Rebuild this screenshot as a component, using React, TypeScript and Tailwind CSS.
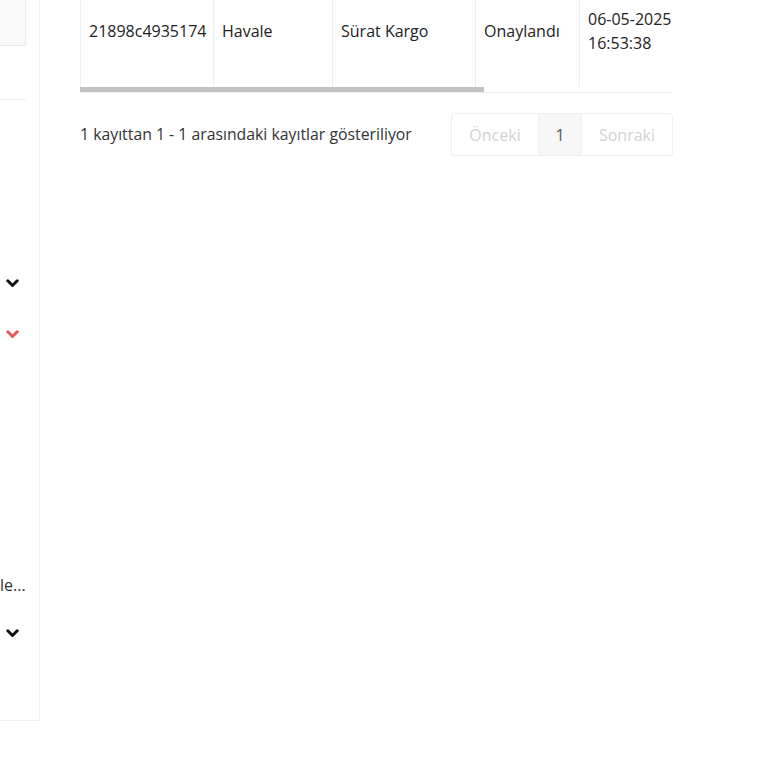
import React from "react";

function Chevron({ color }: { color: string }) {
  return (
    <svg width="13" height="9" viewBox="0 0 13 9">
      <polyline
        points="1.8,1.8 6.5,6.5 11.2,1.8"
        fill="none"
        stroke={color}
        strokeWidth="3"
        strokeLinecap="round"
        strokeLinejoin="round"
      />
    </svg>
  );
}

export default function App() {
  const font = { fontFamily: '"Open Sans", "Noto Sans", sans-serif' };
  return (
    <div className="w-[768px] h-[768px] bg-white flex text-[#333]" style={font}>
      {/* Sidebar */}
      <div className="w-[40px] h-[721px] border-r border-b border-[#f1f1f1] shrink-0 flex flex-col overflow-hidden">
        <div className="w-[26px] h-[46px] bg-[#f9f9f9] border-r border-b border-[#ececec]" />
        <div className="mt-[53px] w-[26px] h-px bg-[#efefef]" />
        <div className="mt-[179px] pl-[6px] h-[9px] flex items-center">
          <Chevron color="#111" />
        </div>
        <div className="mt-[42px] pl-[6px] h-[9px] flex items-center">
          <Chevron color="#e05a5a" />
        </div>
        <div className="mt-[235px] h-[22px] text-[16px] leading-[22px] text-[#333] whitespace-nowrap">
          le...
        </div>
        <div className="mt-[33px] pl-[6px] h-[9px] flex items-center">
          <Chevron color="#111" />
        </div>
      </div>

      {/* Main */}
      <div className="ml-[40px] w-[593px] flex flex-col">
        <div className="w-[593px] overflow-hidden relative">
          <table className="table-fixed w-[700px] border-collapse text-[16px] leading-[24px] text-[#222]">
            <colgroup>
              <col className="w-[133px]" />
              <col className="w-[119px]" />
              <col className="w-[143px]" />
              <col className="w-[104px]" />
              <col className="w-[201px]" />
            </colgroup>
            <tbody>
              <tr className="h-[87px]">
                <td className="border-l border-r border-[#eeeeee] px-[8px] align-top">
                  <div className="h-[62px] flex items-center whitespace-nowrap">21898c4935174</div>
                </td>
                <td className="border-r border-[#eeeeee] px-[8px] align-top">
                  <div className="h-[62px] flex items-center">Havale</div>
                </td>
                <td className="border-r border-[#eeeeee] px-[8px] align-top">
                  <div className="h-[62px] flex items-center">Sürat Kargo</div>
                </td>
                <td className="border-r border-[#eeeeee] px-[8px] align-top">
                  <div className="h-[62px] flex items-center">Onaylandı</div>
                </td>
                <td className="px-[8px] align-top">
                  <div className="h-[62px] flex items-center whitespace-nowrap">
                    06-05-2025
                    <br />
                    16:53:38
                  </div>
                </td>
              </tr>
            </tbody>
          </table>
          <div className="h-[5px] w-[404px] bg-[#c2c2c2]" />
          <div className="h-px w-[592px] bg-[#efefef]" />
        </div>

        <div className="mt-[20px] flex items-center justify-between w-[593px]">
          <div className="text-[15.8px] text-[#333] whitespace-nowrap">
            1 kayıttan 1 - 1 arasındaki kayıtlar gösteriliyor
          </div>
          <div className="flex h-[43px] border border-[#f0f0f0] rounded-[3px] text-[16px]">
            <div className="w-[86px] flex items-center justify-center text-[#d2d2d2]">Önceki</div>
            <div className="w-[44px] flex items-center justify-center bg-[#f7f7f7] border-l border-r border-[#efefef] text-[#555]">
              1
            </div>
            <div className="w-[90px] flex items-center justify-center text-[#d2d2d2]">Sonraki</div>
          </div>
        </div>
      </div>
    </div>
  );
}
